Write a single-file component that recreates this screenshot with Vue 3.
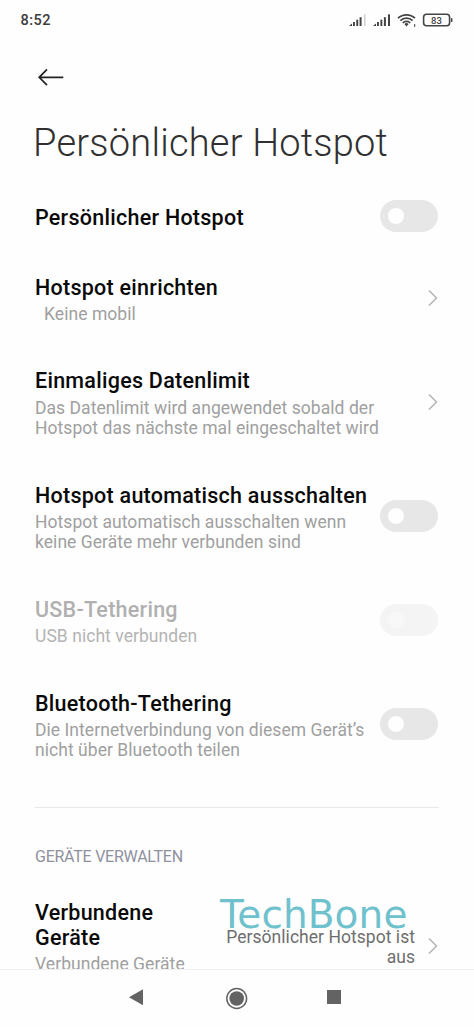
<script setup>
const rows = [
  { title: 'Persönlicher Hotspot', lines: [], control: 'switch', first: true },
  { title: 'Hotspot einrichten', lines: ['Keine mobil'], control: 'chevron', indent: true },
  {
    title: 'Einmaliges Datenlimit',
    lines: ['Das Datenlimit wird angewendet sobald der', 'Hotspot das nächste mal eingeschaltet wird'],
    control: 'chevron',
  },
  {
    title: 'Hotspot automatisch ausschalten',
    lines: ['Hotspot automatisch ausschalten wenn', 'keine Geräte mehr verbunden sind'],
    control: 'switch',
  },
  { title: 'USB-Tethering', lines: ['USB nicht verbunden'], control: 'switch', disabled: true },
  {
    title: 'Bluetooth-Tethering',
    lines: ['Die Internetverbindung von diesem Gerät’s', 'nicht über Bluetooth teilen'],
    control: 'switch',
  },
]
</script>

<template>
  <div class="screen">
    <header class="status">
      <span class="time">8:52</span>
      <svg class="status-icons" width="108" height="20" viewBox="0 0 108 20">
        <g fill="#444">
          <path d="M0 16l3-2.500v2.500z" />
          <rect x="4" y="12" width="1.900" height="4" />
          <rect x="7.300" y="9.700" width="1.900" height="6.300" />
          <rect x="10.600" y="7.200" width="2" height="8.800" />
          <rect x="15" y="4.300" width="1.500" height="11.700" fill="#cfcfcf" />
          <path d="M24 16l3-2.500v2.500z" />
          <rect x="28" y="12" width="1.900" height="4" />
          <rect x="31.400" y="9.700" width="1.900" height="6.300" />
          <rect x="34.900" y="7.200" width="2" height="8.800" />
          <rect x="39" y="4.300" width="2" height="11.700" />
          <path d="M55.400 14l2.100 2.400 2.100-2.400a3 3 0 0 0-4.200 0z" />
          <rect x="65.200" y="14" width="1" height="3" />
        </g>
        <g fill="none" stroke="#444" stroke-width="1.700">
          <path d="M49 8.200a12.400 12.400 0 0 1 17 0" />
          <path d="M51.400 10.700a8.700 8.700 0 0 1 12.200 0" />
          <path d="M53.700 13a5.400 5.400 0 0 1 7.600 0" />
          <rect x="74.600" y="4.300" width="26" height="11.500" rx="3" stroke-width="1.600" />
        </g>
        <rect x="102" y="8.200" width="1.400" height="3.800" fill="#444" />
        <text x="87.500" y="13.600" text-anchor="middle" class="battery">83</text>
      </svg>
    </header>

    <svg class="back" width="28" height="20" viewBox="0 0 28 20">
      <path d="M26.300 10.300H2.200M10 2.300L2.200 10.300l7.800 7.900" fill="none" stroke="#222" stroke-width="1.700" />
    </svg>

    <h1>Persönlicher Hotspot</h1>

    <main>
      <section
        v-for="row in rows"
        :key="row.title"
        class="row"
        :class="{ disabled: row.disabled, first: row.first }"
      >
        <div class="text">
          <h2>{{ row.title }}</h2>
          <div v-if="row.lines.length" class="sub" :class="{ indent: row.indent }">
            <div v-for="line in row.lines" :key="line">{{ line }}</div>
          </div>
        </div>
        <span v-if="row.control === 'switch'" class="switch"><i></i></span>
        <svg v-else class="chevron" width="12" height="18" viewBox="0 0 12 18">
          <path d="M2 1.500l7.500 7.500L2 16.500" />
        </svg>
      </section>

      <hr />
      <h3>GERÄTE VERWALTEN</h3>

      <section class="row last">
        <div class="text">
          <h2>Verbundene<br />Geräte</h2>
          <div class="sub">Verbundene Geräte</div>
        </div>
        <div class="value">Persönlicher Hotspot ist<br />aus</div>
        <svg class="chevron" width="12" height="18" viewBox="0 0 12 18">
          <path d="M2 1.500l7.500 7.500L2 16.500" />
        </svg>
      </section>
    </main>

    <div class="watermark">TechBone</div>

    <nav>
      <svg width="474" height="57" viewBox="0 0 474 57" fill="#636363">
        <path d="M129 27.300l14-8v16z" />
        <circle cx="236.700" cy="28.500" r="9.900" fill="none" stroke="#636363" stroke-width="1.500" />
        <circle cx="236.700" cy="28.500" r="7.300" />
        <rect x="327" y="20" width="14" height="14" />
      </svg>
    </nav>
  </div>
</template>

<style>
body {
  margin: 0;
  background: #fefefe;
}
</style>

<style scoped>
.screen {
  position: relative;
  display: flex;
  flex-direction: column;
  width: 474px;
  height: 1027px;
  overflow: hidden;
  background: #fefefe;
  font-family: Roboto, sans-serif;
  color: #0a0a0a;
}
.status {
  display: flex;
  justify-content: space-between;
  align-items: center;
  height: 40px;
  padding: 0 17px 0 20.500px;
  flex: none;
}
.time {
  font-size: 14.500px;
  font-weight: 500;
  letter-spacing: 0.500px;
  color: #3c3c3c;
}
.battery {
  font-size: 9.500px;
  font-weight: 500;
  fill: #444;
}
.back {
  flex: none;
  margin: 27px 0 0 37px;
}
h1, h2, h3 {
  margin: 0;
  white-space: nowrap;
}
h1 {
  flex: none;
  margin: 33px 0 0 33px;
  height: 59px;
  line-height: 46px;
  font-size: 38px;
  font-weight: 300;
  letter-spacing: 0.220px;
  color: #303030;
}
main {
  flex: 1;
  min-height: 0;
  overflow: hidden;
  padding: 0 35px;
}
.row {
  display: flex;
  justify-content: space-between;
  align-items: center;
  padding: 22px 0;
}
.row.first {
  padding: 21px 0 17.800px;
}
h2 {
  font-size: 21.500px;
  font-weight: 500;
  line-height: 25.500px;
  letter-spacing: 0.260px;
}
.sub {
  margin-top: 3.700px;
  font-size: 17.500px;
  line-height: 20.500px;
  letter-spacing: 0.050px;
  color: #a0a0a0;
  white-space: nowrap;
}
.indent {
  padding-left: 9px;
}
.text {
  width: 335px;
}
.switch {
  flex: none;
  box-sizing: border-box;
  width: 58px;
  height: 32px;
  margin: 0 0.700px 3px 0;
  padding: 8px;
  border-radius: 16px;
  background: #e7e7e7;
}
.switch i {
  display: block;
  width: 16px;
  height: 16px;
  border-radius: 50%;
  background: #fefefe;
}
.chevron {
  flex: none;
  margin-bottom: 3px;
  fill: none;
  stroke: #b4b4b4;
  stroke-width: 1.500;
}
.disabled h2 {
  color: #b0b0b0;
}
.disabled .sub {
  color: #b4b4b4;
}
.disabled .switch {
  background: #f4f4f4;
}
.disabled .switch i {
  background: #f8f8f8;
}
hr {
  height: 1px;
  margin: 24.200px 0 0;
  border: 0;
  background: #e8e8e8;
}
h3 {
  margin-top: 39px;
  font-size: 16px;
  line-height: 20px;
  font-weight: 400;
  letter-spacing: -0.250px;
  color: #8f90a0;
}
.last {
  padding-top: 32.700px;
}
.last h2 {
  line-height: 25.800px;
}
.last .text {
  width: 160px;
}
.last .sub {
  margin-top: 3px;
}
.value {
  flex: 1;
  margin: 20px 12px 0 0;
  text-align: right;
  font-size: 17.500px;
  line-height: 20.500px;
  letter-spacing: 0.040px;
  color: #6e6e6e;
}
.last .chevron {
  margin: 17px 0 0;
}
.watermark {
  position: absolute;
  left: 220px;
  top: 892px;
  font: 39px/46px "DejaVu Sans", sans-serif;
  letter-spacing: 0.100px;
  color: #6fc1cd;
}
nav {
  flex: none;
  height: 57px;
  border-top: 1px solid #f0f0f0;
}
nav svg {
  display: block;
}
</style>
